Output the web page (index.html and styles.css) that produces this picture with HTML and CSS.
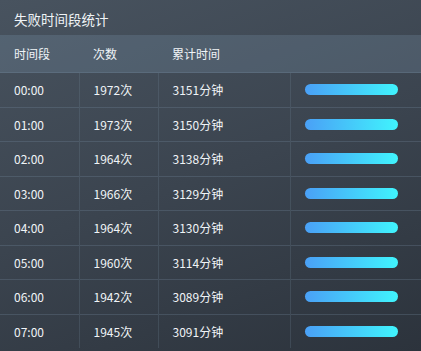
FILE: index.html
```html
<!DOCTYPE html>
<html lang="zh">
<head>
<meta charset="utf-8">
<link rel="stylesheet" href="styles.css">
</head>
<body>
<div class="panel">
  <div class="title">失败时间段统计</div>
  <table class="tbl">
    <colgroup><col class="c1"><col class="c2"><col class="c3"><col class="c4"></colgroup>
    <thead>
      <tr><th>时间段</th><th>次数</th><th>累计时间</th><th></th></tr>
    </thead>
    <tbody>
      <tr><td>00:00</td><td>1972次</td><td>3151分钟</td><td><div class="bar"></div></td></tr>
      <tr><td>01:00</td><td>1973次</td><td>3150分钟</td><td><div class="bar"></div></td></tr>
      <tr><td>02:00</td><td>1964次</td><td>3138分钟</td><td><div class="bar"></div></td></tr>
      <tr><td>03:00</td><td>1966次</td><td>3129分钟</td><td><div class="bar"></div></td></tr>
      <tr><td>04:00</td><td>1964次</td><td>3130分钟</td><td><div class="bar"></div></td></tr>
      <tr><td>05:00</td><td>1960次</td><td>3114分钟</td><td><div class="bar"></div></td></tr>
      <tr><td>06:00</td><td>1942次</td><td>3089分钟</td><td><div class="bar"></div></td></tr>
      <tr><td>07:00</td><td>1945次</td><td>3091分钟</td><td><div class="bar"></div></td></tr>
    </tbody>
  </table>
</div>
</body>
</html>
```
FILE: styles.css
```css
html, body { margin: 0; padding: 0; }
body {
  width: 421px;
  height: 351px;
  overflow: hidden;
  background: #323a44;
  font-family: "Noto Sans CJK SC", "Noto Sans", sans-serif;
  color: #f0f4f7;
}
.panel {
  width: 421px;
  height: 351px;
  background: linear-gradient(160deg, #48535f 0%, #3b444f 50%, #2c333c 100%);
}
.title {
  height: 35px;
  line-height: 38px;
  padding-left: 14px;
  font-size: 13.5px;
}
.tbl {
  width: 421px;
  border-collapse: collapse;
  table-layout: fixed;
  font-size: 12px;
}
.c1 { width: 79px; }
.c2 { width: 79px; }
.c3 { width: 132px; }
.c4 { width: 131px; }
.tbl th {
  height: 37px;
  padding: 0 0 0 14px;
  text-align: left;
  font-weight: normal;
  background: rgba(125,150,175,0.26);
}
.tbl td {
  height: 33.5px;
  padding: 0 0 0 14px;
  border-top: 1px solid rgba(120,140,160,0.28);
  border-left: 1px solid rgba(120,140,160,0.22);
}
.tbl td:first-child { border-left: none; }
.bar {
  width: 93px;
  height: 11px;
  border-radius: 6px;
  background: linear-gradient(90deg, #4aa0f6, #40f4fd);
}
```
